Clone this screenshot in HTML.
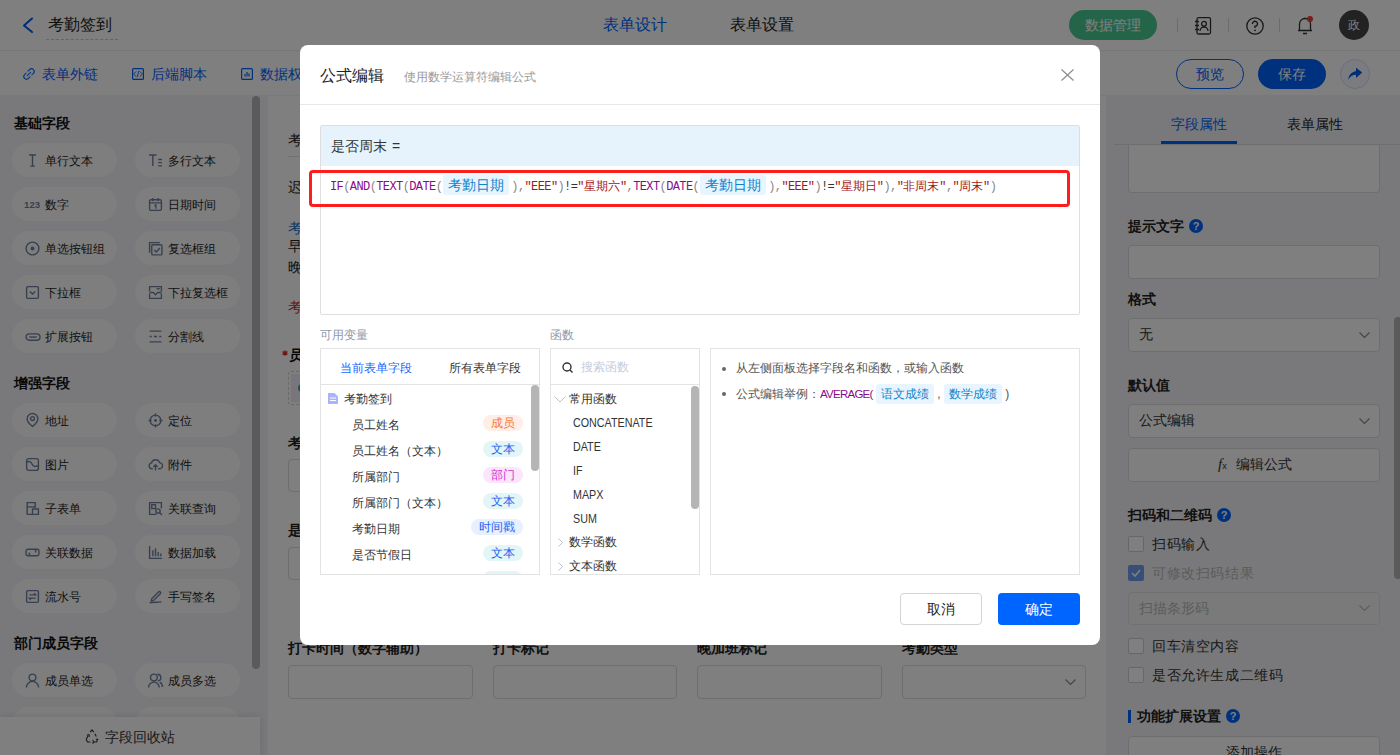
<!DOCTYPE html>
<html><head><meta charset="utf-8">
<style>
*{box-sizing:border-box;margin:0;padding:0}
html,body{width:1400px;height:755px;overflow:hidden;background:#fff;font-family:"Liberation Sans",sans-serif;color:#222}
.a{position:absolute}
.t{position:absolute;white-space:nowrap;line-height:1}
svg{position:absolute;overflow:visible}
/* page */
#hdr{left:0;top:0;width:1400px;height:51px;background:#fff;border-bottom:1px solid #efefef}
#tb{left:0;top:51px;width:1400px;height:45px;background:#fff;border-bottom:1px solid #f3f3f3}
#side{left:0;top:96px;width:268px;height:659px;background:#f2f3f6}
.fb{position:absolute;width:105px;height:34px;border-radius:17px;background:#fcfcfd}
.fb span{position:absolute;left:33px;top:12px;font-size:12px;line-height:12px;white-space:nowrap;color:#1f1f1f}
.fb svg{left:13px;top:9.5px}
.sh{position:absolute;left:14px;font-size:14px;font-weight:bold;line-height:14px;color:#111}
#main{left:268px;top:96px;width:838px;height:659px;background:#fff}
#rp{left:1106px;top:96px;width:294px;height:659px;background:#f2f3f6}
.inp{position:absolute;border:1px solid #dcdcdc;border-radius:4px;background:#fff}
#ov{left:0;top:0;width:1400px;height:755px;background:rgba(0,0,0,.5)}
/* modal */
#md{left:300px;top:45px;width:800px;height:600px;background:#fff;border-radius:8px}
.mono{font-family:"Liberation Mono",monospace;font-size:12px;letter-spacing:-0.6px}
.fn{color:#8b0a8b}.pa{color:#888}.st{color:#a31515}.op{color:#333}
.tag{display:inline-block;background:#e8f4fe;color:#0f84cc;font-family:"Liberation Sans",sans-serif;font-size:14px;letter-spacing:0;border-radius:3px;padding:0 5px;margin:0 2px 0 1px;height:20px;line-height:20px;vertical-align:top}
.cj{letter-spacing:0;font-size:12px}
.vr{position:absolute;left:31px;font-size:12px;line-height:12px;color:#333;white-space:nowrap}
.vt{position:absolute;left:162px;width:40px;height:16px;border-radius:8px;font-size:12px;line-height:17px;text-align:center}
.fr{position:absolute;left:22px;font-size:12px;line-height:12px;color:#333;white-space:nowrap}
.fl{transform:scaleX(.895);transform-origin:0 0}
</style></head><body>

<!-- HEADER -->
<div id="hdr" class="a"></div>
<svg style="left:22px;top:17px" width="12" height="17" viewBox="0 0 12 17"><path d="M10 1.5L2 8.5L10 15" fill="none" stroke="#0058f0" stroke-width="2" stroke-linecap="round" stroke-linejoin="round"/></svg>
<div class="t" style="left:48px;top:17px;font-size:16px;color:#222">考勤签到</div>
<div class="a" style="left:46px;top:39px;width:72px;border-top:1px dashed #c8c8c8"></div>
<div class="t" style="left:603px;top:17px;font-size:16px;color:#0062ff">表单设计</div>
<div class="t" style="left:730px;top:17px;font-size:16px;color:#222">表单设置</div>
<div class="a" style="left:1069px;top:10px;width:88px;height:30px;border-radius:15px;background:#48ca94"></div>
<div class="t" style="left:1085px;top:18px;font-size:14px;color:#fff">数据管理</div>
<div class="a" style="left:1177px;top:18px;width:1px;height:14px;background:#d8d8d8"></div>
<div class="a" style="left:1228px;top:18px;width:1px;height:14px;background:#d8d8d8"></div>
<div class="a" style="left:1279px;top:18px;width:1px;height:14px;background:#d8d8d8"></div>
<svg style="left:1194px;top:17px" width="18" height="18" viewBox="0 0 18 18"><rect x="3" y="0.7" width="13.5" height="16.3" rx="1.5" fill="none" stroke="#333" stroke-width="1.3"/><path d="M1 4.5H5M1 8.5H5M1 12.5H5" stroke="#333" stroke-width="1.3"/><circle cx="10" cy="6.8" r="2.4" fill="none" stroke="#333" stroke-width="1.3"/><path d="M6 14A4 4 0 0 1 14 14" fill="none" stroke="#333" stroke-width="1.3"/></svg>
<svg style="left:1246px;top:17px" width="18" height="18" viewBox="0 0 18 18"><circle cx="9" cy="9" r="8.2" fill="none" stroke="#333" stroke-width="1.3"/><path d="M6.5 7A2.5 2.5 0 1 1 9 9.3V11" fill="none" stroke="#333" stroke-width="1.4"/><circle cx="9" cy="13.3" r="0.9" fill="#333"/></svg>
<svg style="left:1297px;top:16px" width="16" height="19" viewBox="0 0 16 19"><path d="M2.5 14.5V8A5.5 5.5 0 0 1 13.5 8V14.5M1 14.5H15M8 2.5V1.5M6 17.5H10" fill="none" stroke="#333" stroke-width="1.3"/></svg>
<div class="a" style="left:1307px;top:16px;width:6px;height:6px;border-radius:3px;background:#f03a3a"></div>
<div class="a" style="left:1339px;top:10px;width:30px;height:30px;border-radius:15px;background:#444"></div>
<div class="t" style="left:1348px;top:19px;font-size:12px;color:#fff">政</div>

<!-- TOOLBAR -->
<div id="tb" class="a"></div>
<svg style="left:23px;top:68px" width="12" height="12" viewBox="0 0 12 12"><path d="M5 3.2L6.6 1.6A2.6 2.6 0 0 1 10.4 5.4L8.8 7M7 8.8L5.4 10.4A2.6 2.6 0 0 1 1.6 6.6L3.2 5M4.3 7.7L7.7 4.3" fill="none" stroke="#0062ff" stroke-width="1.05" stroke-linecap="round"/></svg>
<svg style="left:132px;top:68px" width="12" height="12" viewBox="0 0 12 12"><rect x="0.6" y="0.6" width="10.8" height="10.8" rx="1" fill="none" stroke="#0062ff" stroke-width="1.2"/><path d="M4.3 3.3L1.6 6L4.3 8.7M7.7 3.3L10.4 6L7.7 8.7M6.9 2.8L5.1 9.2" fill="none" stroke="#0062ff" stroke-width="0.9"/></svg>
<svg style="left:241px;top:68px" width="12" height="12" viewBox="0 0 12 12"><rect x="0.6" y="0.6" width="10.8" height="10.8" rx="1" fill="none" stroke="#0062ff" stroke-width="1.2"/><path d="M4 8.5V6M6 8.5V4M8 8.5V5.5" fill="none" stroke="#0062ff" stroke-width="1.2"/></svg>
<div class="t" style="left:42px;top:67px;font-size:14px;color:#0062ff">表单外链</div>
<div class="t" style="left:151px;top:67px;font-size:14px;color:#0062ff">后端脚本</div>
<div class="t" style="left:260px;top:67px;font-size:14px;color:#0062ff">数据权限</div>
<div class="a" style="left:1176px;top:59px;width:68px;height:30px;border-radius:15px;border:1px solid #0062ff;background:#fff"></div>
<div class="t" style="left:1196px;top:67px;font-size:14px;color:#0062ff">预览</div>
<div class="a" style="left:1258px;top:59px;width:68px;height:30px;border-radius:15px;background:#0062ff"></div>
<div class="t" style="left:1278px;top:67px;font-size:14px;color:#fff">保存</div>
<div class="a" style="left:1340px;top:59px;width:30px;height:30px;border-radius:15px;border:1.3px solid #d5def5;background:#f5f8fe"></div>
<svg style="left:1347px;top:67px" width="17" height="14" viewBox="0 0 17 14"><path d="M1.3 12.7C1.6 8.2 4.5 4.8 9 4.3V0.8L15.2 5.6L9 10.9V7.8C5.5 7.8 3.2 9.3 1.3 12.7Z" fill="#0058f0"/></svg>


<!-- SIDEBAR -->
<div id="side" class="a"></div>
<div id="sidebody">
<div class="sh" style="top:116px">基础字段</div>
<div class="fb" style="left:12px;top:143px"><svg width="15" height="15" viewBox="0 0 14 14"><path d="M3.8 1.8H10.2M7 1.8V12.2M4.8 12.2H9.2" fill="none" stroke="#71809f" stroke-width="1.3"/></svg><span>单行文本</span></div>
<div class="fb" style="left:135px;top:143px"><svg width="15" height="15" viewBox="0 0 14 14"><path d="M1 1.8H8M4.5 1.8V12.2M9.5 6H13M9.5 9H13M9.5 12H13" fill="none" stroke="#71809f" stroke-width="1.3"/></svg><span>多行文本</span></div>
<div class="fb" style="left:12px;top:187px"><b style="position:absolute;left:12px;top:12.5px;font-size:9.5px;line-height:9px;font-weight:900;color:#71809f;letter-spacing:0.1px">123</b><span>数字</span></div>
<div class="fb" style="left:135px;top:187px"><svg width="15" height="15" viewBox="0 0 14 14"><rect x="1.5" y="2.5" width="11" height="10" rx="1.2" fill="none" stroke="#71809f" stroke-width="1.3"/><path d="M4.5 1V4M9.5 1V4M1.5 5.5H12.5M6 8L7.3 7.3V11" fill="none" stroke="#71809f" stroke-width="1.3"/></svg><span>日期时间</span></div>
<div class="fb" style="left:12px;top:231px"><svg width="15" height="15" viewBox="0 0 14 14"><circle cx="7" cy="7" r="6" fill="none" stroke="#71809f" stroke-width="1.3"/><circle cx="7" cy="7" r="1.8" fill="#71809f"/></svg><span>单选按钮组</span></div>
<div class="fb" style="left:135px;top:231px"><svg width="15" height="15" viewBox="0 0 14 14"><path d="M1.5 11V1.5H11" fill="none" stroke="#71809f" stroke-width="1.3"/><rect x="3.5" y="3.5" width="9.5" height="9.5" rx="1" fill="none" stroke="#71809f" stroke-width="1.3"/><path d="M5.8 8.3L7.8 10.3L11 6.5" fill="none" stroke="#71809f" stroke-width="1.3"/></svg><span>复选框组</span></div>
<div class="fb" style="left:12px;top:275px"><svg width="15" height="15" viewBox="0 0 14 14"><rect x="1.5" y="1.5" width="11" height="11" rx="1" fill="none" stroke="#71809f" stroke-width="1.3"/><path d="M4.5 6L7 8.5L9.5 6" fill="none" stroke="#71809f" stroke-width="1.3"/></svg><span>下拉框</span></div>
<div class="fb" style="left:135px;top:275px"><svg width="15" height="15" viewBox="0 0 14 14"><path d="M1.5 6V1.5H12.5V6M1.5 8V12.5H12.5V8M1.5 7H5L7 9L9 7H12.5" fill="none" stroke="#71809f" stroke-width="1.3"/><path d="M8 3.5H11" fill="none" stroke="#71809f" stroke-width="1.3"/></svg><span>下拉复选框</span></div>
<div class="fb" style="left:12px;top:319px"><svg width="15" height="15" viewBox="0 0 14 14"><rect x="1" y="4.5" width="13" height="6" rx="3" fill="none" stroke="#71809f" stroke-width="1.3"/><path d="M4 7.5H11" fill="none" stroke="#71809f" stroke-width="1.3"/></svg><span>扩展按钮</span></div>
<div class="fb" style="left:135px;top:319px"><svg width="15" height="15" viewBox="0 0 14 14"><path d="M1.5 2H12.5M1.5 7H3.5M5.5 7H8.5M10.5 7H12.5M1.5 12H12.5" fill="none" stroke="#71809f" stroke-width="1.3"/></svg><span>分割线</span></div>
<div class="sh" style="top:376px">增强字段</div>
<div class="fb" style="left:12px;top:403px"><svg width="15" height="15" viewBox="0 0 14 14"><path d="M7 12.5C4 10 2 7.8 2 5.5A5 5 0 0 1 12 5.5C12 7.8 10 10 7 12.5Z" fill="none" stroke="#71809f" stroke-width="1.3"/><circle cx="7" cy="5.2" r="1.8" fill="none" stroke="#71809f" stroke-width="1.3"/></svg><span>地址</span></div>
<div class="fb" style="left:135px;top:403px"><svg width="15" height="15" viewBox="0 0 14 14"><circle cx="7" cy="7" r="5" fill="none" stroke="#71809f" stroke-width="1.3"/><circle cx="7" cy="7" r="1.3" fill="#71809f"/><path d="M7 0.5V3.5M7 10.5V13.5M0.5 7H3.5M10.5 7H13.5" fill="none" stroke="#71809f" stroke-width="1.3"/></svg><span>定位</span></div>
<div class="fb" style="left:12px;top:447px"><svg width="15" height="15" viewBox="0 0 14 14"><rect x="1.5" y="1.5" width="11" height="11" rx="2" fill="none" stroke="#71809f" stroke-width="1.3"/><path d="M1.8 5C4 3.5 5.5 4.2 6.5 6.5S9.5 9.5 12.2 8" fill="none" stroke="#71809f" stroke-width="1.3"/></svg><span>图片</span></div>
<div class="fb" style="left:135px;top:447px"><svg width="15" height="15" viewBox="0 0 14 14"><path d="M4.5 11H3.5A2.8 2.8 0 0 1 3.3 5.5A3.9 3.9 0 0 1 10.8 5.2A2.9 2.9 0 0 1 10.5 11H9.5M7 12.5V7.5M5 9.3L7 7.3L9 9.3" fill="none" stroke="#71809f" stroke-width="1.3"/></svg><span>附件</span></div>
<div class="fb" style="left:12px;top:491px"><svg width="15" height="15" viewBox="0 0 14 14"><path d="M2 12.5V1.5H9.5V6.5M2 5.5H9.5M2 12.5H12.5V7.5H7V12.5" fill="none" stroke="#71809f" stroke-width="1.3"/></svg><span>子表单</span></div>
<div class="fb" style="left:135px;top:491px"><svg width="15" height="15" viewBox="0 0 14 14"><path d="M8 12.5H1.5V1.5H12.5V7" fill="none" stroke="#71809f" stroke-width="1.3"/><rect x="3.5" y="3.5" width="3.5" height="3.5" fill="none" stroke="#71809f" stroke-width="1.3"/><circle cx="9.3" cy="9.3" r="2" fill="none" stroke="#71809f" stroke-width="1.3"/><path d="M10.8 10.8L13 13" fill="none" stroke="#71809f" stroke-width="1.3"/></svg><span>关联查询</span></div>
<div class="fb" style="left:12px;top:535px"><svg width="15" height="15" viewBox="0 0 14 14"><path d="M6 10H2.5A1.5 1.5 0 0 1 1 8.5V5.5A1.5 1.5 0 0 1 2.5 4H8.5A1.5 1.5 0 0 1 10 5.5V7M8 4H11.5A1.5 1.5 0 0 1 13 5.5V8.5A1.5 1.5 0 0 1 11.5 10H5.5A1.5 1.5 0 0 1 4 8.5V7" fill="none" stroke="#71809f" stroke-width="1.3"/></svg><span>关联数据</span></div>
<div class="fb" style="left:135px;top:535px"><svg width="15" height="15" viewBox="0 0 14 14"><path d="M1.5 1V12.5H13M4.5 10.5V5M7 10.5V3M9.5 10.5V6.5M12 10.5V8" fill="none" stroke="#71809f" stroke-width="1.3"/></svg><span>数据加载</span></div>
<div class="fb" style="left:12px;top:579px"><svg width="15" height="15" viewBox="0 0 14 14"><rect x="1.5" y="1.5" width="11" height="11" rx="1" fill="none" stroke="#71809f" stroke-width="1.3"/><path d="M4 5.5H10L8.5 4M10 8.5H4L5.5 10" fill="none" stroke="#71809f" stroke-width="1.3"/></svg><span>流水号</span></div>
<div class="fb" style="left:135px;top:579px"><svg width="15" height="15" viewBox="0 0 14 14"><path d="M3.5 9L9.8 2.7A1.2 1.2 0 0 1 11.5 2.7V2.7A1.2 1.2 0 0 1 11.5 4.4L5.2 10.7L3 11.2Z" fill="none" stroke="#71809f" stroke-width="1.3"/><path d="M1.5 13C5 11.8 9 13 12.5 12" fill="none" stroke="#71809f" stroke-width="1.3"/></svg><span>手写签名</span></div>
<div class="sh" style="top:636px">部门成员字段</div>
<div class="fb" style="left:12px;top:663px"><svg width="15" height="15" viewBox="0 0 14 14"><circle cx="7" cy="4.2" r="3.2" fill="none" stroke="#71809f" stroke-width="1.3"/><path d="M1.3 13.5A5.7 5.7 0 0 1 12.7 13.5" fill="none" stroke="#71809f" stroke-width="1.3"/></svg><span>成员单选</span></div>
<div class="fb" style="left:135px;top:663px"><svg width="15" height="15" viewBox="0 0 14 14"><circle cx="5.5" cy="4.2" r="3.2" fill="none" stroke="#71809f" stroke-width="1.3"/><path d="M0.5 13.5A5 5 0 0 1 10.5 13.5M8.8 1.2A3.1 3.1 0 0 1 9 7.4M11 8.6A5 5 0 0 1 13.5 13" fill="none" stroke="#71809f" stroke-width="1.3"/></svg><span>成员多选</span></div>
<div class="fb" style="left:12px;top:707px"><svg width="15" height="15" viewBox="0 0 14 14"><rect x="1.5" y="1.5" width="11" height="11" rx="1" fill="none" stroke="#71809f" stroke-width="1.3"/></svg><span>部门单选</span></div>
<div class="fb" style="left:135px;top:707px"><svg width="15" height="15" viewBox="0 0 14 14"><rect x="1.5" y="1.5" width="11" height="11" rx="1" fill="none" stroke="#71809f" stroke-width="1.3"/></svg><span>部门多选</span></div>
<div class="a" style="left:252px;top:96px;width:8px;height:573px;border-radius:4px;background:#b4b4b4"></div>
<div class="a" style="left:0;top:717px;width:260px;height:38px;background:#fff;box-shadow:0 0 8px rgba(0,0,0,.12)"></div>
<svg style="left:85px;top:729px" width="14" height="14" viewBox="0 0 14 14"><path d="M5.2 3.2L7 0.8L8.8 3.2M9.8 4.7L11.3 7.5M10.9 10.3L12.8 10.3L11.5 13H8.5M5.5 13H2.5L1.2 10.3L3 7M1.8 6.3L4 5.5L4.4 7.8M7.5 11L9 13L7.5 14.5" fill="none" stroke="#333" stroke-width="1.1" stroke-linejoin="round"/></svg>
<div class="t" style="left:105px;top:730px;font-size:14px;color:#333">字段回收站</div>
</div>

<!-- MAIN -->
<div id="main" class="a"></div>
<div class="t" style="left:288px;top:133px;font-size:14px;color:#222">考勤签到表单说明</div>
<div class="a" style="left:288px;top:156px;width:797px;height:1px;background:#e4e4e4"></div>
<div class="t" style="left:288px;top:180px;font-size:14px;color:#222">迟到早退规则说明</div>
<div class="t" style="left:288px;top:221px;font-size:14px;color:#1a6fc4">考勤时间</div>
<div class="t" style="left:288px;top:239px;font-size:14px;color:#222">早上打卡时间</div>
<div class="t" style="left:288px;top:260px;font-size:14px;color:#222">晚上打卡时间</div>
<div class="t" style="left:288px;top:300px;font-size:14px;color:#c43030">考勤提示</div>
<svg style="left:282px;top:349.5px" width="6" height="6" viewBox="0 0 6 6"><path d="M3 0.2V5.8M0.5 1.6L5.5 4.4M0.5 4.4L5.5 1.6" stroke="#d42a2a" stroke-width="1.3"/></svg><div class="t" style="left:289px;top:348px;font-size:14px;color:#111;font-weight:bold">员工姓名</div>
<div class="a" style="left:288px;top:371px;width:500px;height:34px;border:1px dashed #d2d2d2;border-radius:3px;background:#fff"></div>
<div class="a" style="left:291px;top:374px;width:494px;height:28px;background:#f2eafc"></div>
<div class="a" style="left:298px;top:384px;width:8px;height:8px;background:#3bb36a;border-radius:4px"></div>
<div class="t" style="left:288px;top:436px;font-size:14px;color:#222;font-weight:bold">考勤日期</div>
<div class="inp" style="left:288px;top:459px;width:500px;height:33px"></div>
<div class="t" style="left:288px;top:523px;font-size:14px;color:#222;font-weight:bold">是否节假日</div>
<div class="inp" style="left:288px;top:547px;width:500px;height:33px"></div>
<div class="t" style="left:288px;top:641px;font-size:14px;color:#222;font-weight:bold">打卡时间（数字辅助）</div>
<div class="inp" style="left:288px;top:665px;width:185px;height:34px"></div>
<div class="t" style="left:493px;top:641px;font-size:14px;color:#222;font-weight:bold">打卡标记</div>
<div class="inp" style="left:493px;top:665px;width:184px;height:34px"></div>
<div class="t" style="left:697px;top:641px;font-size:14px;color:#222;font-weight:bold">晚加班标记</div>
<div class="inp" style="left:697px;top:665px;width:185px;height:34px"></div>
<div class="t" style="left:902px;top:641px;font-size:14px;color:#222;font-weight:bold">考勤类型</div>
<div class="inp" style="left:902px;top:665px;width:184px;height:34px"></div>
<svg style="left:1065px;top:679px" width="11" height="6" viewBox="0 0 11 6"><path d="M0.5 0.5L5.5 5.5L10.5 0.5" fill="none" stroke="#888" stroke-width="1.2"/></svg>

<!-- RIGHT PANEL -->
<div id="rp" class="a"></div>
<div class="t" style="left:1171px;top:117px;font-size:14px;color:#0062ff">字段属性</div>
<div class="t" style="left:1287px;top:117px;font-size:14px;color:#222">表单属性</div>
<div class="a" style="left:1114px;top:144px;width:286px;height:1px;background:#dcdcdc"></div>
<div class="a" style="left:1161px;top:141px;width:76px;height:3px;background:#0062ff"></div>
<div class="inp" style="left:1128px;top:145px;width:252px;height:48px;border-top:none;border-radius:0 0 4px 4px"></div>
<div class="t" style="left:1128px;top:219px;font-size:14px;font-weight:bold;color:#222">提示文字</div>
<div class="a" style="left:1189px;top:219px;width:14px;height:14px;border-radius:7px;background:#0062ff;color:#fff;font-size:11px;line-height:14px;text-align:center;font-weight:bold">?</div>
<div class="inp" style="left:1128px;top:245px;width:252px;height:34px"></div>
<div class="t" style="left:1128px;top:292px;font-size:14px;font-weight:bold;color:#222">格式</div>
<div class="inp" style="left:1128px;top:318px;width:252px;height:34px"></div>
<div class="t" style="left:1139px;top:327px;font-size:14px;color:#333">无</div>
<svg style="left:1359px;top:332px" width="11" height="6" viewBox="0 0 11 6"><path d="M0.5 0.5L5.5 5.5L10.5 0.5" fill="none" stroke="#888" stroke-width="1.2"/></svg>
<div class="t" style="left:1128px;top:378px;font-size:14px;font-weight:bold;color:#222">默认值</div>
<div class="inp" style="left:1128px;top:404px;width:252px;height:34px"></div>
<div class="t" style="left:1139px;top:413px;font-size:14px;color:#333">公式编辑</div>
<svg style="left:1359px;top:418px" width="11" height="6" viewBox="0 0 11 6"><path d="M0.5 0.5L5.5 5.5L10.5 0.5" fill="none" stroke="#888" stroke-width="1.2"/></svg>
<div class="inp" style="left:1128px;top:448px;width:252px;height:34px"></div>
<div class="t" style="left:1218px;top:456px;font-size:15px;color:#333"><i style="font-family:'Liberation Serif',serif">f</i><span style="font-size:9px">x</span></div>
<div class="t" style="left:1236px;top:457px;font-size:14px;color:#333">编辑公式</div>
<div class="t" style="left:1128px;top:508px;font-size:14px;font-weight:bold;color:#222">扫码和二维码</div>
<div class="a" style="left:1217px;top:508px;width:14px;height:14px;border-radius:7px;background:#0062ff;color:#fff;font-size:11px;line-height:14px;text-align:center;font-weight:bold">?</div>
<div class="a" style="left:1128px;top:536px;width:16px;height:16px;border:1px solid #cfcfcf;border-radius:2px;background:#fff"></div>
<div class="t" style="left:1152px;top:537px;font-size:14px;color:#333;letter-spacing:0.6px">扫码输入</div>
<div class="a" style="left:1128px;top:565px;width:16px;height:16px;border-radius:2px;background:#6e9cf0"></div>
<svg style="left:1131px;top:569px" width="10" height="8" viewBox="0 0 10 8"><path d="M1 4L4 7L9 1" fill="none" stroke="#fff" stroke-width="1.6"/></svg>
<div class="t" style="left:1152px;top:566px;font-size:14px;color:#b8b8b8;letter-spacing:0.6px">可修改扫码结果</div>
<div class="inp" style="left:1128px;top:592px;width:252px;height:33px;background:#f5f5f5;border-color:#e3e3e3"></div>
<div class="t" style="left:1139px;top:601px;font-size:14px;color:#b8b8b8">扫描条形码</div>
<svg style="left:1359px;top:605px" width="11" height="6" viewBox="0 0 11 6"><path d="M0.5 0.5L5.5 5.5L10.5 0.5" fill="none" stroke="#bbb" stroke-width="1.2"/></svg>
<div class="a" style="left:1128px;top:638px;width:16px;height:16px;border:1px solid #cfcfcf;border-radius:2px;background:#fff"></div>
<div class="t" style="left:1152px;top:639px;font-size:14px;color:#333;letter-spacing:0.6px">回车清空内容</div>
<div class="a" style="left:1128px;top:667px;width:16px;height:16px;border:1px solid #cfcfcf;border-radius:2px;background:#fff"></div>
<div class="t" style="left:1152px;top:668px;font-size:14px;color:#333;letter-spacing:0.6px">是否允许生成二维码</div>
<div class="a" style="left:1128px;top:710px;width:3px;height:13px;background:#0062ff"></div>
<div class="t" style="left:1137px;top:709px;font-size:14px;font-weight:bold;color:#222">功能扩展设置</div>
<div class="a" style="left:1226px;top:709px;width:14px;height:14px;border-radius:7px;background:#0062ff;color:#fff;font-size:11px;line-height:14px;text-align:center;font-weight:bold">?</div>
<div class="inp" style="left:1128px;top:736px;width:252px;height:34px"></div>
<div class="t" style="left:1226px;top:745px;font-size:14px;color:#333">添加操作</div>
<div class="a" style="left:1394px;top:317px;width:8px;height:262px;border-radius:4px;background:#b4b4b4"></div>

<div id="ov" class="a"></div>

<!-- MODAL -->
<div id="md" class="a">
<div class="t" style="left:20px;top:23px;font-size:16px;color:#222">公式编辑</div>
<div class="t" style="left:104px;top:26px;font-size:12px;color:#999">使用数学运算符编辑公式</div>
<svg style="left:761px;top:24px" width="13" height="12" viewBox="0 0 13 12"><path d="M0.5 0.5L12.5 11.5M12.5 0.5L0.5 11.5" stroke="#8a8a8a" stroke-width="1.15"/></svg>
<div class="a" style="left:0;top:59px;width:800px;height:1px;background:#e8e8e8"></div>
<div class="a" style="left:20px;top:80px;width:760px;height:190px;border:1px solid #dedede;border-radius:2px;overflow:hidden">
 <div class="a" style="left:0;top:0;width:758px;height:40px;background:#e6f3fd"></div>
 <div class="t" style="left:10px;top:13px;font-size:14px;color:#333">是否周末&nbsp;<span style="margin-left:1px">=</span></div>
</div>
<div class="a" style="left:9px;top:125px;width:761px;height:37px;border:3px solid #ff1c1c;border-radius:4px"></div>
<div class="a mono" style="left:30px;top:130px;height:25px;line-height:25px;white-space:nowrap"><span class="fn">IF</span><span class="pa">(</span><span class="fn">AND</span><span class="pa">(</span><span class="fn">TEXT</span><span class="pa">(</span><span class="fn">DATE</span><span class="pa">(</span><span class="tag">考勤日期</span><span class="pa">)</span><span class="pa">,</span><span class="st">"EEE"</span><span class="pa">)</span><span class="op">!=</span><span class="st">"<span class="cj">星期六</span>"</span><span class="pa">,</span><span class="fn">TEXT</span><span class="pa">(</span><span class="fn">DATE</span><span class="pa">(</span><span class="tag">考勤日期</span><span class="pa">)</span><span class="pa">,</span><span class="st">"EEE"</span><span class="pa">)</span><span class="op">!=</span><span class="st">"<span class="cj">星期日</span>"</span><span class="pa">)</span><span class="pa">,</span><span class="st">"<span class="cj">非周末</span>"</span><span class="pa">,</span><span class="st">"<span class="cj">周末</span>"</span><span class="pa">)</span></div>

<div class="t" style="left:20px;top:284px;font-size:12px;color:#8e97a8">可用变量</div>
<div class="t" style="left:250px;top:284px;font-size:12px;color:#8e97a8">函数</div>

<div class="a" style="left:20px;top:303px;width:220px;height:227px;border:1px solid #e3e3e3;overflow:hidden;background:#fff">
 <div class="t" style="left:19px;top:13px;font-size:12px;color:#1a66ff">当前表单字段</div>
 <div class="t" style="left:128px;top:13px;font-size:12px;color:#333">所有表单字段</div>
 <div class="a" style="left:0;top:35px;width:218px;height:1px;background:#e3e3e3"></div>
 <svg style="left:7px;top:44px" width="10" height="11" viewBox="0 0 10 11"><path d="M0 0H6.5L10 3.5V11H0Z" fill="#a9b4ff"/><path d="M2 5H8M2 7.5H8" stroke="#fff" stroke-width="1"/></svg>
 <div class="vr" style="left:23px;top:44px">考勤签到</div>
 <div class="vr" style="top:70px">员工姓名</div><div class="vt" style="top:66px;background:#ffeee5;color:#f5793a">成员</div>
 <div class="vr" style="top:96px">员工姓名（文本）</div><div class="vt" style="top:92px;background:#e3f6f7;color:#2563f2">文本</div>
 <div class="vr" style="top:122px">所属部门</div><div class="vt" style="top:118px;background:#fbe5fb;color:#d22fd2">部门</div>
 <div class="vr" style="top:148px">所属部门（文本）</div><div class="vt" style="top:144px;background:#e3f6f7;color:#2563f2">文本</div>
 <div class="vr" style="top:174px">考勤日期</div><div class="vt" style="top:170px;left:150px;width:52px;background:#e7f0ff;color:#2563f2">时间戳</div>
 <div class="vr" style="top:200px">是否节假日</div><div class="vt" style="top:196px;background:#e3f6f7;color:#2563f2">文本</div>
 <div class="vt" style="top:222px;background:#e3f6f7;color:#2563f2"></div>
 <div class="a" style="left:210px;top:36px;width:8px;height:86px;border-radius:4px;background:#b5b5b5"></div>
</div>

<div class="a" style="left:250px;top:303px;width:150px;height:227px;border:1px solid #e3e3e3;overflow:hidden;background:#fff">
 <svg style="left:11px;top:13px" width="11" height="11" viewBox="0 0 11 11"><circle cx="5" cy="5" r="4" fill="none" stroke="#333" stroke-width="1.4"/><path d="M8 8L10.5 10.5" stroke="#333" stroke-width="1.4"/></svg>
 <div class="t" style="left:30px;top:12px;font-size:12px;color:#c6cddc">搜索函数</div>
 <div class="a" style="left:0;top:35px;width:148px;height:1px;background:#e3e3e3"></div>
 <svg style="left:3px;top:47px" width="12" height="7" viewBox="0 0 12 7"><path d="M0.5 0.5L6 6L11.5 0.5" fill="none" stroke="#b9c3d3" stroke-width="1"/></svg>
 <div class="fr" style="left:18px;top:44px">常用函数</div>
 <div class="fr fl" style="top:68px">CONCATENATE</div>
 <div class="fr fl" style="top:92px">DATE</div>
 <div class="fr fl" style="top:116px">IF</div>
 <div class="fr fl" style="top:140px">MAPX</div>
 <div class="fr fl" style="top:164px">SUM</div>
 <svg style="left:7px;top:189px" width="5" height="9" viewBox="0 0 5 9"><path d="M0.5 0.5L4.5 4.5L0.5 8.5" fill="none" stroke="#b9c3d3" stroke-width="1"/></svg>
 <div class="fr" style="left:18px;top:187px">数学函数</div>
 <svg style="left:7px;top:213px" width="5" height="9" viewBox="0 0 5 9"><path d="M0.5 0.5L4.5 4.5L0.5 8.5" fill="none" stroke="#b9c3d3" stroke-width="1"/></svg>
 <div class="fr" style="left:18px;top:211px">文本函数</div>
 <div class="a" style="left:140px;top:37px;width:8px;height:123px;border-radius:4px;background:#b5b5b5"></div>
</div>

<div class="a" style="left:410px;top:303px;width:370px;height:227px;border:1px solid #e3e3e3;background:#fff">
 <div class="a" style="left:11px;top:18px;width:4px;height:4px;border-radius:2px;background:#666"></div>
 <div class="t" style="left:25px;top:13px;font-size:12px;color:#555">从左侧面板选择字段名和函数，或输入函数</div>
 <div class="a" style="left:11px;top:43px;width:4px;height:4px;border-radius:2px;background:#666"></div>
 <div class="t" style="left:25px;top:35px;font-size:12px;line-height:20px;color:#555">公式编辑举例：<span style="color:#8b0a8b;font-size:11.5px;letter-spacing:-0.75px">AVERAGE(</span> <span style="display:inline-block;background:#e8f4fe;color:#0f84cc;border-radius:3px;padding:0 5px;height:20px">语文成绩</span> , <span style="display:inline-block;background:#e8f4fe;color:#0f84cc;border-radius:3px;padding:0 5px;height:20px">数学成绩</span> )</div>
</div>

<div class="a" style="left:600px;top:548px;width:82px;height:32px;border:1px solid #d4d4d4;border-radius:4px;background:#fff"></div>
<div class="t" style="left:627px;top:557px;font-size:14px;color:#222">取消</div>
<div class="a" style="left:698px;top:548px;width:82px;height:32px;border-radius:4px;background:#0064ff"></div>
<div class="t" style="left:725px;top:557px;font-size:14px;color:#fff">确定</div>
</div>

</body></html>
